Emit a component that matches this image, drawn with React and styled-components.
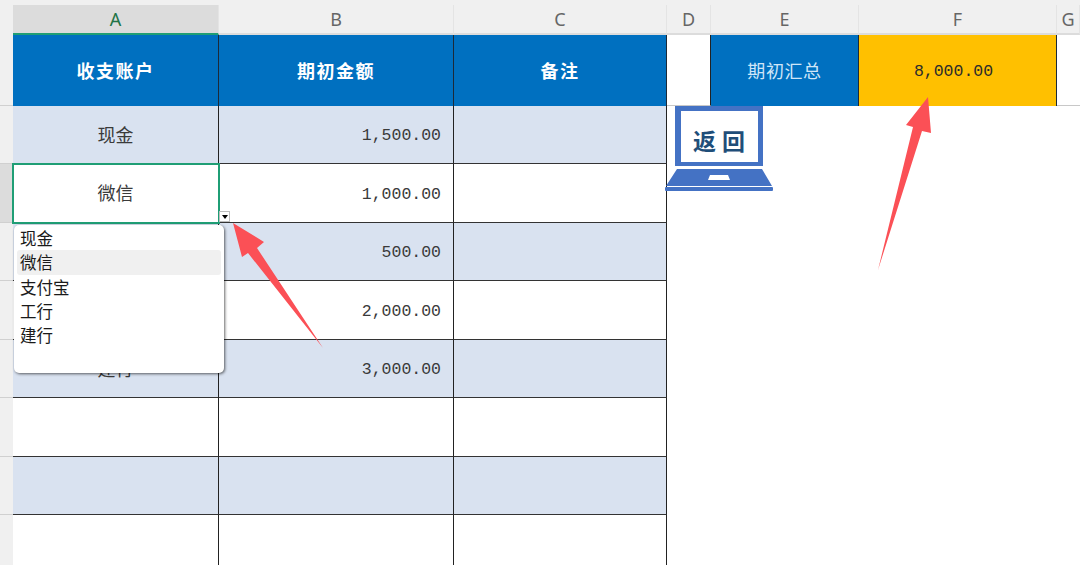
import React from "react";
import styled, { createGlobalStyle } from "styled-components";

const COLUMNS = "13px 206px 235px 213px 44px 148px 198px 1fr";
const CJK = `"Noto Sans CJK SC", sans-serif`;
const MONO = `"Liberation Mono", "Noto Sans CJK SC", monospace`;

const GlobalStyle = createGlobalStyle`
  html, body {
    margin: 0;
    background: #fff;
  }
`;

const Page = styled.div`
  position: relative;
  width: 1080px;
  height: 565px;
  overflow: hidden;
  background: #fff;
  font-family: ${CJK};
`;

/* Column letters */
const LetterRow = styled.div`
  display: grid;
  grid-template-columns: ${COLUMNS};
  height: 35px;
  box-sizing: border-box;
  padding-top: 5px;
  background: #f0f0f0;
`;
const Letter = styled.div`
  display: flex;
  align-items: center;
  justify-content: center;
  font: 18px "Noto Sans", sans-serif;
  box-sizing: border-box;
  border-right: 1px solid #e4e4e4;
  border-bottom: 2px solid ${(p) => (p.$active ? "#1f9e75" : "#dcdcdc")};
  background: ${(p) => (p.$active ? "#dcdcdc" : "#f0f0f0")};
  color: ${(p) => (p.$active ? "#217346" : "#666")};
`;
const Corner = styled.div`
  background: #f0f0f0;
`;

/* Rows */
const HeadRow = styled.div`
  display: grid;
  grid-template-columns: ${COLUMNS};
  height: 71px;
`;
const DataRow = styled.div`
  display: grid;
  grid-template-columns: ${COLUMNS};
  height: ${(p) => p.$h}px;
`;
const RowHead = styled.div`
  box-sizing: border-box;
  background: ${(p) => (p.$active ? "#dcdcdc" : "#f0f0f0")};
  border-bottom: 1px solid #d0d0d0;
`;
const HeadCell = styled.div`
  display: flex;
  align-items: center;
  justify-content: center;
  box-sizing: border-box;
  padding-bottom: 2px;
  background: #0070c0;
  border-right: 1px solid #1c2a38;
  color: #fff;
  font-size: 18px;
  font-weight: 700;
  letter-spacing: 1.5px;
`;
const EmptyHead = styled.div`
  box-sizing: border-box;
  background: #fff;
  border-bottom: 1px solid #c8c8c8;
  border-right: ${(p) => (p.$edge ? "1px solid #222" : "none")};
`;
const SummaryLabel = styled(HeadCell)`
  color: #cfe6f8;
  font-weight: 400;
  letter-spacing: 0.6px;
`;
const SummaryValue = styled(HeadCell)`
  background: #ffc000;
  color: #2b2b2b;
  font: 400 16.5px ${MONO};
  letter-spacing: 0;
  padding: 2px 8px 0 0;
`;
const Cell = styled.div`
  position: relative;
  display: flex;
  align-items: center;
  justify-content: ${(p) => (p.$number ? "flex-end" : "center")};
  box-sizing: border-box;
  padding: ${(p) => (p.$number ? "2px 12px 0 0" : "0 0 2px 0")};
  background: ${(p) => (p.$shaded ? "#d9e2f0" : "#fff")};
  border-right: 1px solid #222;
  border-bottom: ${(p) => (p.$last ? "none" : "1px solid #333")};
  color: #3a3a3a;
  font-family: ${(p) => (p.$number ? MONO : CJK)};
  font-size: ${(p) => (p.$number ? "16.5px" : "18px")};
  ${(p) => p.$active && `
    z-index: 2;
    outline: 2px solid #1f9e75;
    outline-offset: -1px;
  `}
`;

/* Validation dropdown */
const PickerButton = styled.div`
  position: absolute;
  left: 219px;
  top: 211px;
  z-index: 3;
  width: 11px;
  height: 11px;
  box-sizing: border-box;
  display: flex;
  align-items: center;
  justify-content: center;
  background: #fff;
  border: 1px solid #bdbdbd;
  &::after {
    content: "";
    border-left: 3px solid transparent;
    border-right: 3px solid transparent;
    border-top: 4px solid #000;
  }
`;
const Menu = styled.div`
  position: absolute;
  left: 14px;
  top: 225px;
  z-index: 3;
  width: 210px;
  height: 148px;
  box-sizing: border-box;
  padding: 1px 3px;
  display: flex;
  flex-direction: column;
  background: #fff;
  border-radius: 5px;
  box-shadow: 1px 1px 3px rgba(0, 0, 0, 0.6);
`;
const MenuItem = styled.div`
  height: 24.3px;
  flex: none;
  display: flex;
  align-items: center;
  padding-left: 3px;
  border-radius: 3px;
  font-size: 16.5px;
  color: #1a1a1a;
  background: ${(p) => (p.$active ? "#f0f0f0" : "transparent")};
`;

/* Red arrows drawn over the sheet */
const Arrow = styled.svg`
  position: absolute;
  left: 0;
  top: 0;
  z-index: 4;
  pointer-events: none;
`;

/* Laptop shaped back button */
const BackButton = styled.div`
  position: absolute;
  left: 665px;
  top: 106px;
  z-index: 4;
  width: 108px;
  height: 86px;
`;
const BackLabel = styled.span`
  position: absolute;
  left: 3px;
  width: 108px;
  top: 18px;
  text-align: center;
  font: 700 23px/32px ${CJK};
  letter-spacing: 6px;
  color: #1f4e79;
`;

const rows = [
  { name: "现金", amount: "1,500.00", h: 58 },
  { name: "微信", amount: "1,000.00", h: 59, active: true },
  { name: "支付宝", amount: "500.00", h: 58 },
  { name: "工行", amount: "2,000.00", h: 59 },
  { name: "建行", amount: "3,000.00", h: 58 },
  { name: "", amount: "", h: 59 },
  { name: "", amount: "", h: 58 },
  { name: "", amount: "", h: 51, last: true },
];

const options = ["现金", "微信", "支付宝", "工行", "建行"];

const App = () => {
  return (
    <Page>
      <GlobalStyle />
      <LetterRow>
        <Corner />
        <Letter $active>A</Letter>
        <Letter>B</Letter>
        <Letter>C</Letter>
        <Letter>D</Letter>
        <Letter>E</Letter>
        <Letter>F</Letter>
        <Letter>G</Letter>
      </LetterRow>

      <HeadRow>
        <RowHead />
        <HeadCell>收支账户</HeadCell>
        <HeadCell>期初金额</HeadCell>
        <HeadCell>备注</HeadCell>
        <EmptyHead $edge />
        <SummaryLabel>期初汇总</SummaryLabel>
        <SummaryValue>8,000.00</SummaryValue>
        <EmptyHead />
      </HeadRow>

      {rows.map((row, i) => (
        <DataRow key={i} $h={row.h}>
          <RowHead $active={row.active} />
          <Cell $shaded={i % 2 === 0} $active={row.active} $last={row.last}>
            {row.name}
          </Cell>
          <Cell $shaded={i % 2 === 0} $number $last={row.last}>
            {row.amount}
          </Cell>
          <Cell $shaded={i % 2 === 0} $last={row.last} />
        </DataRow>
      ))}

      <PickerButton />
      <Menu>
        {options.map((option) => (
          <MenuItem key={option} $active={option === "微信"}>
            {option}
          </MenuItem>
        ))}
      </Menu>

      <Arrow width="1080" height="565" viewBox="0 0 1080 565">
        <polygon
          fill="#fb5056"
          points="233,223 264,242 257,248 323,348 248,253 242,257"
        />
        <polygon
          fill="#fb5056"
          points="928,97 931,133 922,131 878,270 913,127 906,125"
        />
      </Arrow>

      <BackButton>
        <svg width="108" height="86" viewBox="0 0 108 86">
          <path
            fill="#4472c4"
            fillRule="evenodd"
            d="M10 0H98V60H10ZM16 5V56H93V5Z"
          />
          <path
            fill="#4472c4"
            fillRule="evenodd"
            d="M12 63H97L107 80H1ZM45 69L43 74H65L63 69Z"
          />
          <rect x="0" y="81" width="108" height="4" rx="1" fill="#4472c4" />
        </svg>
        <BackLabel>返回</BackLabel>
      </BackButton>
    </Page>
  );
};

export default App;
